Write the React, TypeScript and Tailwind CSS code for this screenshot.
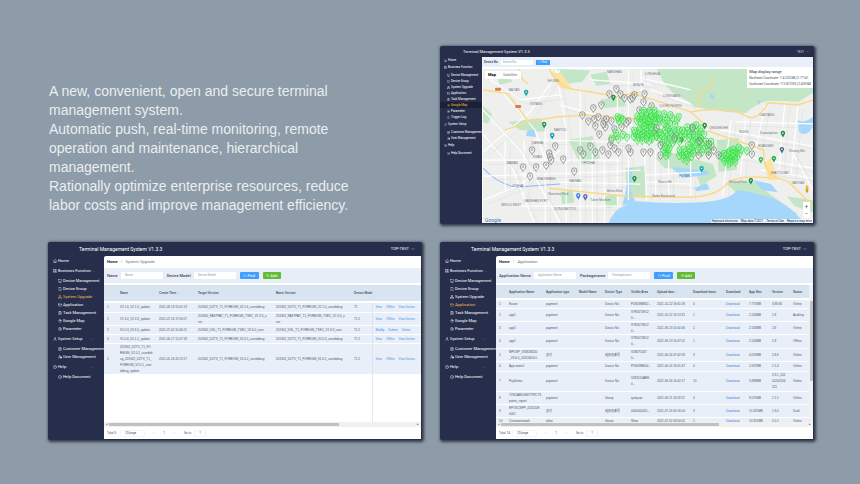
import type { ReactNode } from 'react';
import clsx from 'clsx';
import {
  Bell, ChevronDown, CircleHelp, CirclePlus, ClipboardList, CreditCard, FileText, House, Info, LayoutGrid,
  MapPin, Monitor, Network, Search, Settings, Smartphone, User, UserCog,
} from 'lucide-react';

const INTRO = [
  'A new, convenient, open and secure terminal',
  'management system.',
  'Automatic push, real-time monitoring, remote',
  'operation and maintenance, hierarchical',
  'management.',
  'Rationally optimize enterprise resources, reduce',
  'labor costs and improve management efficiency.',
];

const MENU = [
  { label: 'Home', icon: House, items: [] },
  {
    label: 'Business Function',
    icon: LayoutGrid,
    items: [
      { label: 'Device Management', icon: Monitor },
      { label: 'Device Group', icon: Smartphone },
      { label: 'System Upgrade', icon: Network },
      { label: 'Application', icon: CreditCard },
      { label: 'Task Management', icon: ClipboardList },
      { label: 'Google Map', icon: MapPin },
      { label: 'Parameter', icon: Settings },
      { label: 'Trigger Log', icon: Bell },
    ],
  },
  {
    label: 'System Setup',
    icon: User,
    items: [
      { label: 'Customer Management', icon: FileText },
      { label: 'User Management', icon: UserCog },
    ],
  },
  { label: 'Help', icon: CircleHelp, items: [{ label: 'Help Document', icon: Info }] },
];

function Sidebar({ active, small }: { active: string; small?: boolean }) {
  return (
    <nav className={clsx('shrink-0 text-white whitespace-nowrap', small ? 'w-[42px] text-[3px]' : 'w-14 text-[4px]')}>
      {MENU.map((group) => (
        <div key={group.label}>
          <a href="#" className={clsx('flex items-center', small ? 'h-[7px] gap-px pl-[4px]' : 'h-[10px] gap-px pl-[5px]')}>
            <group.icon className={clsx('shrink-0', small ? 'size-[3px]' : 'size-[4px]')} />
            {group.label}
            {group.items.length > 0 && !small && <ChevronDown className="ml-auto mr-[10px] size-[3px] shrink-0 text-gray-400" />}
          </a>
          {group.items.length > 0 && (
            <ul className="py-px">
              {group.items
                .filter((item) => small || item.label !== 'Trigger Log')
                .map((item) => (
                  <li key={item.label}>
                    <a
                      href="#"
                      className={clsx(
                        'flex items-center gap-px',
                        small ? 'h-[6px] pl-[7px]' : 'h-[8px] pl-[10px]',
                        item.label === active && 'text-[#f0bd4a]',
                        item.label === active && small && 'bg-[#1c2036]',
                      )}
                    >
                      <item.icon className={clsx('shrink-0', small ? 'size-[3px]' : 'size-[4px]')} />
                      {item.label}
                    </a>
                  </li>
                ))}
            </ul>
          )}
        </div>
      ))}
    </nav>
  );
}

function Panel({ active, account, small, children }: { active: string; account: string; small?: boolean; children: ReactNode }) {
  return (
    <section className="flex flex-col rounded-[2px] bg-[#272e4b] font-['Roboto',sans-serif] shadow-[1px_1px_3px_1px_rgba(20,28,40,0.75)]">
      <header
        className={clsx('flex items-center justify-between text-white', small ? 'h-[11px] pl-[23px] pr-[5px]' : 'h-[14px] pl-[31px] pr-[7px]')}
      >
        <h2 className={clsx('leading-[6px]', small ? 'text-[4px]' : 'text-[5px]')}>Terminal Management System V1.3.3</h2>
        <button className={clsx('flex items-center gap-[2px] leading-[6px]', small ? 'text-[3px] text-gray-300' : 'text-[4px]')}>
          {account}
          <ChevronDown className={small ? 'size-[3px]' : 'size-[4px]'} />
        </button>
      </header>
      <div className="flex flex-1">
        <Sidebar active={active} small={small} />
        <div className="mr-px mb-px flex min-w-0 flex-1 flex-col rounded-tl-[2px] bg-white">{children}</div>
      </div>
    </section>
  );
}

function Field({ id, label }: { id: string; label: string }) {
  return (
    <div className="flex items-center gap-[3px]">
      <label htmlFor={id} className="font-medium text-[#3f4654]">{label}</label>
      <input id={id} placeholder={label} className="h-[7px] w-[42px] bg-white px-[4px] text-[3px] leading-[7px] placeholder:text-gray-400" />
    </div>
  );
}

function Toolbar({ fields, page }: { fields: string[]; page: string }) {
  return (
    <>
      <p className="flex h-[12px] items-center gap-[3px] px-[3px] text-[4px] leading-[6px] text-gray-500">
        <a href="#" className="font-bold text-gray-800">Home</a>
        <span className="text-gray-400">/</span>
        {page}
      </p>
      <form className="mb-[2px] flex h-[15px] items-center gap-[4px] bg-[#e8eef7] px-[3px] text-[4px] leading-[6px] whitespace-nowrap">
        {fields.map((f) => (
          <Field key={f} id={`${page}-${f}`} label={f} />
        ))}
        <button type="button" className="flex h-[7px] w-[19px] items-center justify-center gap-px rounded-[1px] bg-[#409eff] text-white">
          <Search className="size-[3px]" />
          Find
        </button>
        <button type="button" className="flex h-[7px] w-[18px] items-center justify-center gap-px rounded-[1px] bg-[#63bb35] text-white">
          <CirclePlus className="size-[3px]" />
          Add
        </button>
      </form>
    </>
  );
}

function Pager({ id, total }: { id: string; total: number }) {
  return (
    <footer className="flex h-[12px] items-center px-[3px] text-[3px] leading-[5px] text-gray-600">
      <span className="w-[13px]">Total {total}</span>
      <div className="flex h-[7px] w-[25px] items-center rounded-[1px] border border-gray-100 pr-[2px]">
        <select aria-label="Rows per page" defaultValue="20" className="h-[5px] flex-1 appearance-none px-[4px]">
          <option value="20">20/page</option>
        </select>
        <ChevronDown className="size-[3px] text-gray-400" />
      </div>
      <button className="ml-[6px] w-[4px] text-gray-400">‹</button>
      <button className="mx-[7px] w-[4px] font-bold text-[#409eff]">1</button>
      <button className="w-[4px] text-gray-400">›</button>
      <label htmlFor={id} className="ml-[7px] w-[10px]">Go to</label>
      <input id={id} defaultValue="1" className="h-[7px] w-[12px] rounded-[1px] border border-gray-100 text-center" />
    </footer>
  );
}

function ScrollBar({ thumb }: { thumb: string }) {
  return (
    <div className="flex h-[5px] items-center justify-between bg-[#f1f1f1] px-[2px] text-[3px] leading-[3px] text-gray-600">
      <span>◂</span>
      <div className="flex-1 px-px">
        <div className={clsx('h-[3px] bg-[#c1c1c1]', thumb)} />
      </div>
      <span>▸</span>
    </div>
  );
}

type Row = { height: string; cells: string[] };

const UPGRADE_HEAD = ['', 'Name', 'Create Time ↕', 'Target Version', 'Basic Version', 'Device Mode', ''];
const UPGRADE_COLS = ['w-[16px]', 'w-[39px]', 'w-[39px]', 'w-[78px]', 'w-[78px]', 'w-[18px]', 'w-auto'];
const UPGRADE_ROWS: Row[] = [
  {
    height: 'h-[10px]',
    cells: ['1', 'V2.1.6_V2.1.0_update', '2021-09-13 15:01:13', 'Z01902_DZTX_T1_FOREIGN_V2.1.6_userdebug', 'Z01902_DZTX_T1_FOREIGN_V2.1.0_userdebug', 'T1', 'View|Offline|View Device'],
  },
  {
    height: 'h-[13px]',
    cells: ['2', 'V1.3.0_V1.3.3_update', '2021-07-16 17:00:07', 'Z01902_FASTPAY_T1_FOREIGN_TSEC_V1.3.3_u\nser', 'Z01902_FASTPAY_T1_FOREIGN_TSEC_V1.3.0_u\nser', 'T1.2', 'View|Offline|View Device'],
  },
  {
    height: 'h-[9px]',
    cells: ['3', 'V1.0.3_V2.6.0_update', '2021-07-02 10:46:21', 'Z01902_DSL_T1_FOREIGN_TSEC_V2.6.0_user', 'Z01902_DSL_T1_FOREIGN_TSEC_V1.9.3_user', 'T1.2', 'Modify|Submit|Delete'],
  },
  {
    height: 'h-[9px]',
    cells: ['4', 'V1.0.6_V1.1.1_update', '2021-06-17 12:07:18', 'Z01902_DZTX_T1_FOREIGN_V2.0.5_userdebug', 'Z01902_DZTX_T1_FOREIGN_V2.0.3_userdebug', 'T1.2', 'View|Offline|View Device'],
  },
  {
    height: 'h-[31px]',
    cells: ['5', 'Z01902_DZTX_T1_FO\nREIGN_V2.0.2_userdeb\nug_Z01902_DZTX_T1_\nFOREIGN_V2.0.1_user\ndebug_update', '2021-05-16 20:13:17', 'Z01902_DZTX_T1_FOREIGN_V2.0.2_userdebug', 'Z01902_DZTX_T1_FOREIGN_V2.0.1_userdebug', 'T1.2', 'View|Offline|View Device'],
  },
];

const APP_HEAD = ['', 'Application Name', 'Application type', 'Model Name', 'Device Type', 'Visible Area', 'Upload date ↕', 'Download times', 'Download', 'App Size', 'Version', 'Status'];
const APP_COLS = ['w-[13px]', 'w-[37px]', 'w-[33px]', 'w-[26px]', 'w-[26px]', 'w-[26px]', 'w-[36px]', 'w-[33px]', 'w-[23px]', 'w-[23px]', 'w-[21px]', 'w-auto'];
const APP_ROWS: Row[] = [
  { height: 'h-[9px]', cells: ['1', 'Eason', 'payment', '', 'Device No', 'P26039B802...', '2021-10-22 19:41:28', '0', 'Download', '7.775MB', '3.88.80', 'Online'] },
  { height: 'h-[13px]', cells: ['2', 'app1', 'payment', '', 'Device No', 'V7E2071E12\n0...', '2021-10-22 16:13:31', '1', 'Download', '2.534MB', '1.8', 'Auditing'] },
  { height: 'h-[13px]', cells: ['3', 'app3', 'payment', '', 'Device No', 'V7E2071E12\n0...', '2021-09-13 10:40:46', '2', 'Download', '2.533MB', '2.8', 'Online'] },
  { height: 'h-[14px]', cells: ['4', 'app1', 'payment', '', 'Device No', 'V7E2071E12\n0...', '2021-09-13 10:47:01', '1', 'Download', '2.534MB', '1.8', 'Offline'] },
  { height: 'h-[13px]', cells: ['5', 'MPOSP_V3082B240\n_V3.6.0_20210616.0', '支付', '', '组织设备号', 'V2B07100T\n0...', '2021-06-16 07:42:58', '3', 'Download', '4.619MB', '2.8.6', 'Online'] },
  { height: 'h-[10px]', cells: ['6', 'App name1', 'payment', '', 'Device No', 'P26039B804...', '2021-06-16 19:41:47', '0', 'Download', '2.637MB', '1.1.4', 'Online'] },
  { height: 'h-[20px]', cells: ['7', 'PayDemo', 'payment', '', 'Device No', 'V2E1150ARE\n0...', '2021-09-16 10:42:17', '10', 'Download', '5.888MB', '2.9.1_202\n01202106\n221', 'Online'] },
  { height: 'h-[13px]', cells: ['8', 'TVSUABUGNOTIFICTS\npoints_report', 'payment', '', 'Group', 'quitquan', '2021-09-11 18:23:22', '4', 'Download', '9.071MB', '1.1.5', 'Online'] },
  { height: 'h-[13px]', cells: ['9', 'EPOSCNPP_Z02021E\n0001', '支付', '', '组织设备号', '0000000411...', '2021-07-16 00:16:04', '3', 'Download', '10.325MB', '1.9.0', 'Draft'] },
  { height: 'h-[7px]', cells: ['10', 'Cinemanetwork', 'other', '', 'Group', 'Shop', '2021-07-02 09:00:02', '1', 'Download', '10.351MB', '2.0.1', 'Online'] },
];

const TABLE = "w-full table-fixed border-collapse self-start text-left font-['Liberation_Sans','Noto_Sans_CJK_SC',sans-serif] text-[3px] leading-[6px] whitespace-pre text-gray-600";

function UpgradePanel() {
  return (
    <Panel active="System Upgrade" account="TOP-TEST">
      <Toolbar page="System Upgrade" fields={['Name', 'Device Model']} />
      <div className="min-h-[137px] flex-1">
        <table className={TABLE}>
          <thead>
            <tr className="h-[17px] border-b-2 border-white bg-[#d9e4f1]">
              {UPGRADE_HEAD.map((h, i) => (
                <th key={i} className={clsx('p-0 font-bold', UPGRADE_COLS[i])}>{h}</th>
              ))}
            </tr>
          </thead>
          <tbody>
            {UPGRADE_ROWS.map((row) => (
              <tr key={row.cells[0]} className={clsx('border-b border-white bg-[#e8eff9]', row.height)}>
                {row.cells.map((cell, i) =>
                  i === 6 ? (
                    <td key={i} className="border-l border-l-[#dbe3ee] p-0 pl-[3px]">
                      <div className="flex gap-[4px] text-[#3f8fe8]">
                        {cell.split('|').map((a) => (
                          <a key={a} href="#">{a}</a>
                        ))}
                      </div>
                    </td>
                  ) : (
                    <td key={i} className={clsx('p-0', i === 0 && 'pl-[3px]')}>{cell}</td>
                  ),
                )}
              </tr>
            ))}
            <tr className="h-[48px]">
              <td colSpan={6} className="p-0" />
              <td className="border-l border-l-[#e6e9ef] p-0" />
            </tr>
          </tbody>
        </table>
      </div>
      <ScrollBar thumb="w-3/4" />
      <Pager id="upgrade-page" total={5} />
    </Panel>
  );
}

function ApplicationPanel() {
  return (
    <Panel active="Application" account="TOP-TEST">
      <Toolbar page="Application" fields={['Application Name', 'Packagename']} />
      <div className="flex max-h-[137px] overflow-hidden">
        <table className={TABLE}>
          <thead>
            <tr className="h-[14px] border-b-2 border-white bg-[#d9e4f1]">
              {APP_HEAD.map((h, i) => (
                <th key={i} className={clsx('p-0 font-bold', APP_COLS[i])}>{h}</th>
              ))}
            </tr>
          </thead>
          <tbody>
            {APP_ROWS.map((row) => (
              <tr key={row.cells[0]} className={clsx('border-b border-white bg-[#e8eff9]', row.height)}>
                {row.cells.map((cell, i) => (
                  <td key={i} className={clsx('p-0', i === 0 && 'pl-[3px]')}>
                    {i === 8 ? <a href="#" className="text-[#3f7fc8]">{cell}</a> : cell}
                  </td>
                ))}
              </tr>
            ))}
          </tbody>
        </table>
        <div className="w-[4px] shrink-0 bg-[#f1f1f1] pt-[16px]">
          <div className="mx-auto h-[80px] w-[3px] bg-[#c1c1c1]" />
        </div>
      </div>
      <ScrollBar thumb="w-[71%]" />
      <Pager id="application-page" total={14} />
    </Panel>
  );
}

/* Map artwork */

const GRAY_PINS = [
  [609, 94], [616, 89], [620, 94], [624, 98], [630, 99], [601, 105], [593, 108], [582, 115], [588, 121], [594, 119],
  [598, 117], [595, 126], [604, 121], [606, 119], [611, 121], [605, 127], [603, 124], [614, 129], [599, 134], [621, 127],
  [628, 121], [626, 123], [532, 150], [555, 146], [549, 153], [550, 157], [551, 160], [563, 159], [580, 150], [583, 154],
  [574, 171], [523, 167], [536, 167], [546, 165], [530, 176], [590, 146], [595, 152], [602, 150], [608, 154], [610, 145],
  [611, 140], [618, 152], [614, 148], [630, 152], [628, 148], [634, 95], [632, 98], [644, 94], [643, 102], [651, 106], [639, 110],
  [643, 152], [650, 152], [660, 155], [751, 145], [751, 154],
];

const CLUSTERS = [
  { cx: 648, cy: 118, rx: 13, ry: 9, n: 30 },
  { cx: 645, cy: 134, rx: 14, ry: 8, n: 30 },
  { cx: 669, cy: 120, rx: 12, ry: 7, n: 12 },
  { cx: 669, cy: 136, rx: 14, ry: 9, n: 24 },
  { cx: 693, cy: 133, rx: 12, ry: 9, n: 20 },
  { cx: 700, cy: 146, rx: 13, ry: 8, n: 18 },
  { cx: 685, cy: 154, rx: 8, ry: 7, n: 14 },
  { cx: 666, cy: 151, rx: 4, ry: 5, n: 8 },
  { cx: 729, cy: 157, rx: 9, ry: 7, n: 20 },
  { cx: 738, cy: 151, rx: 10, ry: 4, n: 7 },
  { cx: 619, cy: 136, rx: 9, ry: 5, n: 6 },
  { cx: 619, cy: 119, rx: 4, ry: 3, n: 5 },
];

// golden angle spread keeps each cluster evenly filled
const GREEN_PINS = CLUSTERS.flatMap(({ cx, cy, rx, ry, n }) =>
  Array.from({ length: n }, (_, i) => {
    const r = Math.sqrt((i + 0.5) / n);
    return [cx + Math.cos(i * 2.4 + cx) * rx * r, cy + Math.sin(i * 2.4 + cx) * ry * r];
  }),
);

const LATE_GRAY_PINS = [[692, 128], [699, 141], [708, 144], [713, 150], [708, 155], [698, 155], [718, 155], [674, 138], [656, 128], [660, 145]];

const POIS = [
  [526, 93, '#16a3a5'], [544, 125, '#1f8f5f'], [552, 136, '#16a3a5'], [613, 98, '#1d8b4b'], [634, 179, '#1d8b4b'],
  [578, 196, '#4285f4'], [585, 197, '#5c6bc0'], [701, 169, '#16a3a5'], [750, 181, '#1d8b4b'], [782, 134, '#1d8b4b'],
  [781, 150, '#546e8a'], [773, 159, '#1aa34a'], [760, 160, '#2bbf55'], [704, 126, '#1d8b4b'], [681, 140, '#1d8b4b'],
] as const;

const ROADS = [
  'M483 110L520 150L560 223', 'M483 134L512 168L534 223', 'M500 90L535 130L545 160', 'M483 200L520 185L560 150',
  'M490 80L520 100L560 95', 'M483 152L530 112L560 70', 'M505 140V190', 'M524 140V195', 'M545 120V223', 'M556 70L566 130V223',
  'M580 90V223', 'M592 140V223', 'M604 160V223', 'M617 90V205', 'M628 70V200', 'M640 70L646 200', 'M655 150V198', 'M668 160V198',
  'M690 160V196', 'M730 120L722 196', 'M745 115L740 175', 'M764 105L755 150', 'M784 102L778 170', 'M797 105L790 175', 'M483 160H620',
  'M483 176L600 172L640 170', 'M520 206H620', 'M534 140L640 142', 'M560 105L640 128', 'M590 80L650 84', 'M640 78L690 90',
  'M650 90L690 104', 'M645 175L700 172', 'M645 182L690 184', 'M700 150L812 168', 'M720 130L812 146', 'M735 122L812 124', 'M560 182L640 184',
  'M790 150L812 190', 'M760 170L812 178',
];

const HIGHWAYS = [
  'M519 69Q520 80 528 84', 'M549 69Q558 88 575 90T616 97L640 92', 'M483 90L508 94Q518 107 528 122', 'M505 130L528 122L556 117L586 115L636 119L650 125',
  'M549 188L586 192L626 196', 'M626 196L690 197Q715 196 725 185T770 178', 'M630 93L663 103L690 112L707 127', 'M690 112Q730 106 743 115T767 103L797 105L812 100',
  'M713 77Q710 92 702 91T700 108', 'M707 131L740 142L763 150Q762 170 772 176L788 182L812 206',
];

const MAP_LABELS = [
  [553, 82, 'SHIJING'], [614, 73, 'NANSHAN'], [514, 91, 'BAOAN'], [536, 105, 'XIXIANG'], [652, 75, 'LONGHUA'], [638, 86, 'MINZHI'],
  [671, 97, 'LONGGANG'], [670, 107, 'LUOHU NORTH'], [718, 129, 'QINGSHUIHE'], [743, 133, 'BUXIN'], [766, 116, 'LIANTANG'], [560, 131, 'NANTOU'],
  [537, 144, 'QIANHAI'], [537, 158, 'XINAN'], [512, 164, 'MAWAN'], [518, 187, 'YUEHAI'], [546, 180, 'ZHAOSHANG'], [511, 206, 'SEKOU WEST'],
  [536, 202, 'NANSHAN PORT'], [565, 210, 'DONGJIAOTOU'], [575, 182, 'HAIWAN'], [589, 164, 'HOUHAI'], [558, 195, 'Shenzhen Park'],
  [600, 201, 'Talent Museum'], [614, 192, 'Binhai Blvd'], [663, 197, 'Binhe Boulevard'], [684, 177, 'FUTIAN'], [664, 183, 'Shazui Rd'],
  [765, 147, 'HUANGBEI'], [796, 152, 'Wutong Mtn'], [768, 134, 'Dawangshan'], [737, 183, 'Wetland Park'], [779, 174, 'SHATOUJIAO'], [797, 184, 'YANTIAN'],
] as const;

function Pin({ x, y, color, fill }: { x: number; y: number; color: string; fill: string }) {
  return (
    <g transform={`translate(${x} ${y})`}>
      <path d="M0 4.4C-.6 2.8-2.7 1.8-2.7-.5A2.7 2.7 0 0 1 2.7-.5C2.7 1.8.6 2.8 0 4.4Z" fill={fill} stroke={color} strokeWidth=".7" />
      <path d="M-1.2-.9H1.2M-.8.4H.8M0-1.8V.6" stroke={color} strokeWidth=".4" />
    </g>
  );
}

function CityMap() {
  return (
    <svg viewBox="483 69 329 154" preserveAspectRatio="xMidYMid slice" className="block h-full w-full" role="img" aria-label="Device map">
      <rect x="480" y="66" width="336" height="160" fill="#efefee" />
      <g fill="#c3e6c6">
        <path d="M656 69L664 84L672 93Q685 99 694 107L726 112L745 113Q756 103 768 101L798 102L812 93V69Z" />
        <path d="M557 69L590 71L582 82L566 84Z M496 76L508 73L512 82L500 85Z M508 122L540 118L546 132L520 130Z M590 75L606 72L610 84L596 86Z" />
        <path d="M568 140L592 136L600 158L580 164Z M625 168L645 166V198L626 196Z M600 100L622 96L626 106L604 108Z M483 106L492 114L488 124L483 122Z" />
        <path d="M655 158Q670 148 690 158L712 164L716 176L700 186L694 170L664 168Z M716 140L738 138L736 170L718 172Z" />
        <path d="M725 183L752 181L768 193L797 214L790 214L757 194L735 192Z M560 192L572 190L574 202L562 204Z M604 196L616 194L618 206L606 208Z M786 196L812 200V212L794 206Z" />
      </g>
      <g fill="#a5d6fb">
        <path d="M608 223Q613 210 623 206T636 201Q670 204 700 202T736 190Q750 191 757 194Q786 200 803 223Z" />
        <path d="M636 203L622 205L626 188L629 168L632 168L630 190Z" />
        <path d="M670 167L700 170Q712 170 706 175L682 178Z M693 188L706 183L709 189L696 191Z M752 180L770 184L777 192L762 190Z M797 120Q802 124 812 117V126Q806 138 798 132Z M526 136Q526 128 534 130L536 137Z" />
        <path d="M710 93L714 97L712 100L709 97Z M756 100L760 101L758 105Z M668 128L676 130L674 135L667 133Z" />
      </g>
      <path d="M483 168Q498 184 516 187L560 184" fill="none" stroke="#8bbdf0" strokeWidth="1" />
      <g fill="none" stroke="#fff" strokeWidth="1.2">
        {ROADS.map((d) => <path key={d} d={d} />)}
      </g>
      <g fill="none" stroke="#d5d8dc" strokeWidth=".4">
        {ROADS.map((d) => <path key={d} d={d} transform="translate(5 4)" />)}
      </g>
      <path d="M764 162L770 158L777 180L768 180Z M549 72L562 74L572 90L560 88Z" fill="#fbe3a2" />
      <g fill="none" stroke="#f9d98a" strokeWidth="1.5">
        {HIGHWAYS.map((d) => <path key={d} d={d} />)}
      </g>
      <g fill="#e07b52">
        <rect x="495" y="88" width="6" height="3" rx="1" />
        <rect x="515" y="105" width="6" height="3" rx="1" />
      </g>
      <g fontSize="3" fill="#6f7684" textAnchor="middle" className="font-['Liberation_Sans',sans-serif]">
        {MAP_LABELS.map(([x, y, text]) => <text key={text} x={x} y={y}>{text}</text>)}
      </g>
      {POIS.map(([x, y, color], i) => (
        <g key={i} fill={color}>
          <path d={`M${x} ${y + 3.5}L${x - 2} ${y}A2.2 2.2 0 1 1 ${x + 2} ${y}Z`} />
          <circle cx={x} cy={y - 0.8} r=".8" fill="#fff" />
        </g>
      ))}
      {GRAY_PINS.map(([x, y], i) => <Pin key={i} x={x} y={y} color="#707073" fill="#ffffff60" />)}
      {GREEN_PINS.map(([x, y], i) => <Pin key={i} x={x} y={y} color="#1fdf33" fill="#b9f7b950" />)}
      {LATE_GRAY_PINS.map(([x, y], i) => <Pin key={i} x={x} y={y} color="#707073" fill="#ffffff30" />)}
    </svg>
  );
}

function MapPanel() {
  return (
    <Panel active="Google Map" account="TEST" small>
      <form className="flex h-[10px] items-center gap-[3px] bg-[#e8eff8] px-[2px] text-[3px] leading-[5px] text-[#4b5362]">
        <label htmlFor="device-no" className="font-bold">Device No</label>
        <input id="device-no" placeholder="Device No" className="h-[5px] w-[32px] bg-white px-[2px] placeholder:text-gray-400" />
        <button type="button" className="flex h-[5px] w-[14px] items-center justify-center gap-px bg-[#409eff] text-white">
          <Search className="size-[2px]" />
          Find
        </button>
      </form>
      <div className="relative mt-[2px] ml-px h-[154px]">
        <CityMap />
        <div className="absolute top-[2px] left-[2px] flex h-[8px] items-center bg-white text-[4px] leading-[6px]">
          <button className="px-[3px] font-bold">Map</button>
          <button className="px-[4px] text-gray-500">Satellite</button>
        </div>
        <div className="absolute top-0 right-0 bg-white px-[2px] pb-px text-[3px] leading-[6px] whitespace-nowrap text-gray-600">
          <p className="text-[4px] text-gray-800">Map display range</p>
          <p>Northeast Coordinate: 114.230288,22.77141</p>
          <p>Southwest Coordinate: 113.837283,22.450948</p>
        </div>
        <div className="absolute right-[3px] bottom-[5px] flex flex-col items-center">
          <svg viewBox="0 0 6 8" className="mb-[9px] h-[8px] w-[6px]">
            <circle cx="3" cy="2" r="1.4" fill="#f2b51d" />
            <path d="M1.5 3.5H4.5L4 7.5H2Z" fill="#d99c14" />
          </svg>
          <button aria-label="Zoom in" className="h-[8px] w-[7px] bg-white text-[6px] leading-[8px] text-gray-600">+</button>
          <button aria-label="Zoom out" className="h-[8px] w-[7px] bg-white text-[6px] leading-[8px] text-gray-600">−</button>
        </div>
        <span className="absolute bottom-0 left-[2px] text-[5px] leading-[6px] text-[#4a78c4]">Google</span>
        <p className="absolute right-0 bottom-0 flex gap-[3px] bg-white/70 px-px text-[3px] leading-[4px] whitespace-nowrap text-gray-800">
          <span>Keyboard shortcuts</span>
          <span>Map data ©2021</span>
          <a href="#">Terms of Use</a>
          <a href="#">Report a map error</a>
        </p>
      </div>
    </Panel>
  );
}

export default function App() {
  return (
    <main className="min-h-screen bg-[#8e9ba8] pt-[46px] pr-[46px] pb-[43px] pl-12">
      <div className="grid grid-cols-2 gap-x-[18px] gap-y-[18px]">
        <div className="pt-[36px] pl-px font-['Liberation_Sans',sans-serif] text-[14px] leading-[19px] font-light whitespace-nowrap text-[#e9eef1]">
          {INTRO.map((line) => (
            <p key={line}>{line}</p>
          ))}
        </div>
        <MapPanel />
        <UpgradePanel />
        <ApplicationPanel />
      </div>
    </main>
  );
}
